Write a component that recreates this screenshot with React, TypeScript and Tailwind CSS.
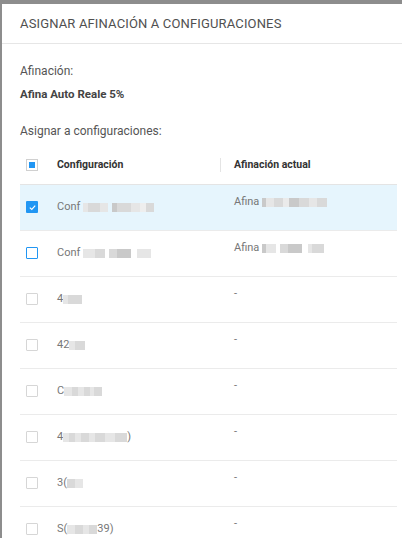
import React from "react";

type Seg = [number, string];

function Blur({ segs }: { segs: Seg[] }) {
  return (
    <span className="inline-flex h-[9px] items-center align-middle">
      {segs.map(([w, c], i) => (
        <span key={i} className="h-[9px]" style={{ width: w, background: c }} />
      ))}
    </span>
  );
}

function Check({ state }: { state: "checked" | "blue" | "gray" | "indet" }) {
  if (state === "checked") {
    return (
      <span className="flex h-[12px] w-[12px] items-center justify-center rounded-[1px] bg-[#2196f3]">
        <svg width="9" height="9" viewBox="0 0 10 10">
          <path d="M2 5.2 L4.2 7.2 L8 3" fill="none" stroke="#fff" strokeWidth="1.3" />
        </svg>
      </span>
    );
  }
  if (state === "indet") {
    return (
      <span className="flex h-[12px] w-[12px] items-center justify-center border border-[#d0d0d0] bg-white">
        <span className="h-[6px] w-[6px] bg-[#2196f3]" />
      </span>
    );
  }
  return (
    <span
      className={
        state === "blue"
          ? "block h-[12px] w-[12px] rounded-[1px] border border-[#2196f3] bg-white"
          : "block h-[12px] w-[12px] rounded-[1px] border border-[#d6d6d6] bg-white"
      }
    />
  );
}

type Row = {
  check: "checked" | "blue" | "gray";
  c1: React.ReactNode;
  c2: React.ReactNode;
  hl?: boolean;
};

const g1 = "#d9d9d9";
const g2 = "#c9c9c9";
const g3 = "#e6e6e6";

const rows: Row[] = [
  {
    check: "checked",
    hl: true,
    c1: (
      <>
        Conf{" "}
        <Blur segs={[[5, g3], [12, g1], [8, g3], [4, "transparent"], [5, g2], [14, g1], [9, g3], [6, "#eeeeee"], [8, g1]]} />
      </>
    ),
    c2: (
      <>
        Afina{" "}
        <Blur segs={[[4, g2], [8, g3], [9, g1], [6, "#eaeaea"], [10, g2], [10, g1], [8, g3], [10, g1]]} />
      </>
    ),
  },
  {
    check: "blue",
    c1: (
      <>
        Conf{" "}
        <Blur segs={[[12, g3], [10, g1], [4, "transparent"], [8, g1], [14, g2], [6, "transparent"], [14, g3]]} />
      </>
    ),
    c2: (
      <>
        Afina{" "}
        <Blur segs={[[4, g2], [10, g3], [4, "transparent"], [8, g1], [14, g2], [6, "transparent"], [4, g3], [12, g1]]} />
      </>
    ),
  },
  { check: "gray", c1: <>4<Blur segs={[[5, g3], [14, g1]]} /></>, c2: "-" },
  { check: "gray", c1: <>42<Blur segs={[[6, g3], [10, g1]]} /></>, c2: "-" },
  { check: "gray", c1: <>C<Blur segs={[[8, g3], [6, g1], [6, g3], [6, g1], [4, g3], [8, g1]]} /></>, c2: "-" },
  {
    check: "gray",
    c1: (
      <>
        4<Blur segs={[[6, g3], [6, g1], [6, g3], [8, g1], [6, g3], [10, g1], [10, g3], [12, g1]]} />)
      </>
    ),
    c2: "-",
  },
  { check: "gray", c1: <>3(<Blur segs={[[8, g1], [8, g3]]} /></>, c2: "-" },
  { check: "gray", c1: <>S(<Blur segs={[[8, g3], [8, g1], [6, g3], [8, g1]]} />39)</>, c2: "-" },
];

export default function App() {
  return (
    <div
      className="flex h-[538px] w-[402px] overflow-hidden bg-[#8d8d8d]"
      style={{ fontFamily: "Roboto, 'Liberation Sans', sans-serif" }}
    >
      <div className="mt-[4px] ml-[2px] w-[420px] shrink-0 bg-white">
        <div className="flex h-[40px] items-center border-b border-[#e6e6e6] px-[18px]">
          <h1 className="text-[13px] tracking-[0.15px] text-[#505050]">ASIGNAR AFINACIÓN A CONFIGURACIONES</h1>
        </div>
        <div className="pl-[18px] pr-[23px]">
          <p className="mt-[20px] text-[12px] leading-[14px] text-[#555]">Afinación:</p>
          <p className="mt-[9px] text-[11.5px] font-bold leading-[14px] text-[#444]">Afina Auto Reale 5%</p>
          <p className="mt-[23px] text-[12px] leading-[14px] text-[#555]">Asignar a configuraciones:</p>
          <div className="mt-[7px] w-[377px]">
            <div className="flex h-[40px] items-center border-b border-[#e4e4e4]">
              <div className="w-[37px] pl-[6px]">
                <Check state="indet" />
              </div>
              <div className="flex w-[164px] items-center justify-between text-[10.5px] font-bold text-[#333]">
                <span>Configuración</span>
                <span className="h-[14px] w-px bg-[#e4e4e4]" />
              </div>
              <div className="pl-[13px] text-[10.5px] font-bold text-[#333]">Afinación actual</div>
            </div>
            {rows.map((r, i) => (
              <div
                key={i}
                className={
                  "flex h-[46px] border-b border-[#ebebeb] " + (r.hl ? "bg-[#e6f5fd]" : "bg-white")
                }
              >
                <div className="w-[37px] pt-[16px] pl-[6px]">
                  <Check state={r.check} />
                </div>
                <div className="w-[164px] pt-[14px] text-[11px] leading-[16px] text-[#777]">{r.c1}</div>
                <div className="pl-[13px] pt-[9px] text-[11px] leading-[16px] text-[#777]">{r.c2}</div>
              </div>
            ))}
          </div>
        </div>
      </div>
    </div>
  );
}
